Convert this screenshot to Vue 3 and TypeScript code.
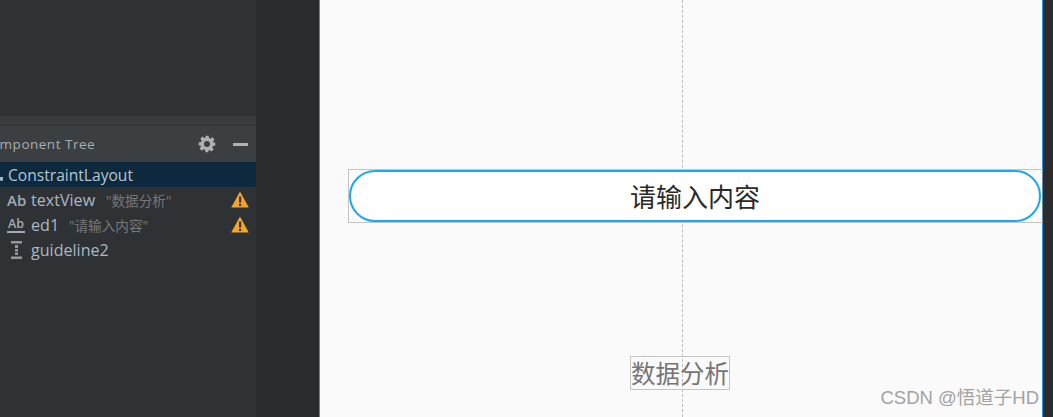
<template>
  <div class="editor">
    <aside class="side">
      <div class="side-top"></div>
      <div class="side-band"></div>
      <div class="tree-head">
        <span class="tree-title">Component Tree</span>
        <svg class="gear" width="18" height="18" viewBox="0 0 24 24">
          <path fill="#afb1b3" fill-rule="evenodd" d="M10 1h4l.6 3.1 1.9.8 2.6-1.8 2.8 2.8-1.8 2.6.8 1.9L23 10v4l-3.1.6-.8 1.9 1.8 2.6-2.8 2.8-2.6-1.8-1.9.8L14 23h-4l-.6-3.1-1.9-.8-2.6 1.8-2.8-2.8 1.8-2.6-.8-1.9L1 14v-4l3.1-.6.8-1.9-1.8-2.6 2.8-2.8 2.6 1.8 1.9-.8zM12 8a4 4 0 1 0 0 8 4 4 0 0 0 0-8z" />
        </svg>
        <span class="dash"></span>
      </div>
      <div class="tree-row selected">
        <span class="layout-mark"></span>
        <span class="name root-name">ConstraintLayout</span>
      </div>
      <div v-for="row in rows" :key="row.name" class="tree-row">
        <span class="row-icon" :class="{ under: row.kind === 'edit' }">
          <template v-if="row.kind !== 'guide'">Ab</template>
          <svg v-else width="11" height="18" viewBox="0 0 11 18">
            <path fill="#8f989f" d="M0 0h11v2.5H0zM0 15.500h11V18H0zM4 4h3v3H4zM4 8h3v2.500H4zM4 11.500h3V14H4z" />
          </svg>
        </span>
        <span class="name">{{ row.name }}</span>
        <span v-if="row.text" class="hint" :class="row.kind">"{{ row.text }}"</span>
        <svg v-if="row.text" class="warn" width="18" height="17" viewBox="0 0 18 17">
          <path fill="#f2a52e" d="M9 0.500 17.800 16.500H0.200z" />
          <path fill="#3b3226" d="M8 5.500h2.200v6H8zM8 12.800h2.200v2.200H8z" />
        </svg>
      </div>
    </aside>
    <div class="gutter"></div>
    <main class="canvas">
      <div class="guideline"></div>
      <div class="input-box">
        <div class="input-pill">请输入内容</div>
      </div>
      <div class="label-box">数据分析</div>
      <div class="watermark">CSDN @悟道子HD</div>
    </main>
    <div class="gutter-right"></div>
  </div>
</template>

<script setup lang="ts">
const rows = [
  { name: 'textView', text: '数据分析', kind: 'view' },
  { name: 'ed1', text: '请输入内容', kind: 'edit' },
  { name: 'guideline2', text: '', kind: 'guide' },
];
</script>

<style>
html,
body {
  margin: 0;
  overflow: hidden;
  background: #2b2b2b;
}
</style>

<style scoped>
.editor {
  display: flex;
  width: 1053px;
  height: 417px;
  overflow: hidden;
  font-family: "Open Sans", "Noto Sans CJK SC", sans-serif;
}

.side {
  width: 256px;
  flex-shrink: 0;
  background: #2f3234;
  overflow: hidden;
}

.side-top {
  height: 116px;
}

.side-band {
  height: 9px;
  background: #393c3e;
  border-bottom: 1px solid #2f3133;
}

.tree-head {
  height: 36px;
  background: #3c3f41;
  display: flex;
  align-items: center;
  padding-right: 8px;
}

.tree-title {
  margin-left: -18px;
  color: #a8adb0;
  font-size: 13.5px;
  letter-spacing: 0.5px;
  white-space: nowrap;
}

.gear {
  margin-left: auto;
  margin-right: 17px;
}

.dash {
  width: 15px;
  height: 3px;
  background: #afb1b3;
}

.tree-row {
  height: 25px;
  display: flex;
  align-items: center;
  padding-left: 7px;
  padding-right: 7px;
}

.selected {
  background: #0d293e;
  padding-left: 0;
}

.layout-mark {
  width: 3px;
  height: 4px;
  margin-top: 8px;
  margin-right: 5px;
  background: #a9b7c6;
  border-radius: 0 0 2px 2px;
}

.name {
  color: #a9b7c6;
  font-size: 16.100px;
  white-space: nowrap;
}

.root-name {
  color: #b7c5d2;
  font-size: 15.600px;
}

.row-icon {
  width: 24px;
  color: #a2abb3;
  font-size: 15px;
  font-weight: 600;
  line-height: 16px;
  flex-shrink: 0;
  display: flex;
}

.row-icon svg {
  margin-left: 4px;
}

.row-icon.under {
  font-size: 12.500px;
  width: 18px;
  margin-right: 6px;
  border-bottom: 2px solid #a2abb3;
  line-height: 14px;
  justify-content: center;
}

.hint {
  color: #787878;
  font-size: 13.600px;
  margin-left: 11px;
  white-space: nowrap;
}

.hint.edit {
  margin-left: 10px;
}

.warn {
  margin-left: auto;
}

.gutter {
  width: 63px;
  flex-shrink: 0;
  background: #2b2c2d;
}

.canvas {
  position: relative;
  width: 722px;
  flex-shrink: 0;
  background: #fafafa;
  border-left: 1px solid #2196f3;
  border-right: 1px solid #2196f3;
}

.guideline {
  position: absolute;
  left: 362px;
  top: 0;
  bottom: 0;
  border-left: 1px dashed #bdbdbd;
}

.input-box {
  position: absolute;
  left: 28px;
  top: 169px;
  width: 695px;
  height: 54px;
  box-sizing: border-box;
  border: 1px solid #c4c4c4;
  border-right: 1px dashed #8a8a8a;
}

.input-pill {
  box-sizing: border-box;
  height: 52px;
  width: 692px;
  padding-bottom: 2px;
  background: #fff;
  border: 2px solid #1ba9ec;
  border-radius: 26px;
  display: flex;
  align-items: center;
  justify-content: center;
  color: #2a2a2a;
  font-size: 26px;
  font-family: "Noto Sans CJK SC", sans-serif;
}

.label-box {
  position: absolute;
  left: 310px;
  top: 356px;
  box-sizing: border-box;
  width: 100px;
  height: 34px;
  border: 1px solid #c4c4c4;
  color: #757575;
  font-size: 24.500px;
  line-height: 32px;
  text-align: center;
  font-family: "Noto Sans CJK SC", sans-serif;
}

.watermark {
  position: absolute;
  right: 3px;
  top: 386px;
  color: #a3a3a3;
  font-size: 18.500px;
  line-height: 24px;
  white-space: nowrap;
  font-family: "Liberation Sans", "Noto Sans CJK SC", sans-serif;
}

.gutter-right {
  flex: 1;
  background: #2b2c2d;
}
</style>
